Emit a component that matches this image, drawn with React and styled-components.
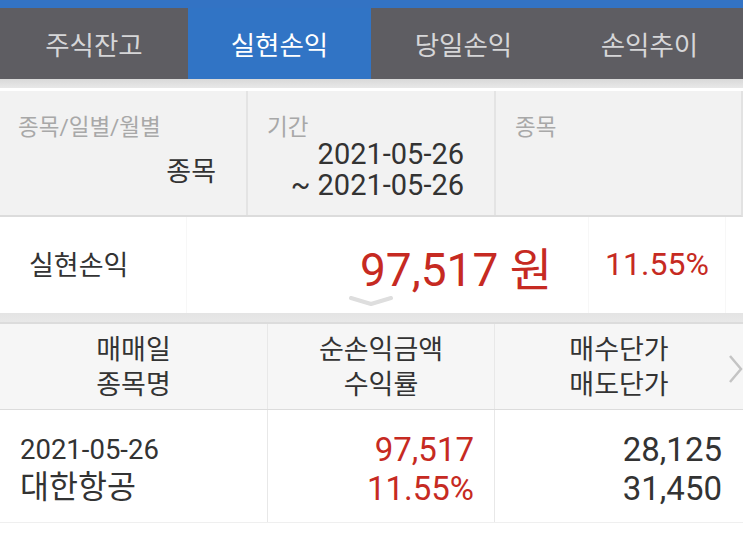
import React from "react";
import styled, { createGlobalStyle } from "styled-components";

const Global = createGlobalStyle`
    body {
        margin: 0;
        background: #fff;
        font-family: Roboto, "Noto Sans CJK KR", sans-serif;
        color: #333;
    }
`

const Page = styled.div`
    width: 743px;
    height: 545px;
    overflow: hidden;
    background: #fff;
`

const TopStrip = styled.div`
    height: 8px;
    background: #3373c4;
`

const TabBar = styled.div`
    display: grid;
    grid-template-columns: 188px 183px 185px 1fr;
    height: 71px;
    background: #5e5d62;
`

const Tab = styled.div`
    display: flex;
    align-items: center;
    justify-content: center;
    font-size: 26.5px;
    color: ${p => p.$active ? "#fff" : "#d6d6d8"};
    background: ${p => p.$active ? "#3174c5" : "transparent"};
`

const Gap = styled.div`
    height: ${p => p.$h}px;
    background: ${p => p.$bg};
`

const Filter = styled.div`
    display: grid;
    grid-template-columns: 246px 248px 1fr;
    height: 126px;
    background: #f2f2f2;
    border-bottom: 2px solid #dcdcdc;
    border-right: 2px solid #e2e2e2;
    box-sizing: border-box;
`

const FilterCell = styled.div`
    display: flex;
    flex-direction: column;
    padding: 23px 30px 0 ${p => p.$pl || 18}px;
    border-left: ${p => p.$first ? "none" : "2px solid #e4e4e4"};
`

const Label = styled.div`
    font-size: 22.5px;
    line-height: 26px;
    color: #a8a8a8;
`

const FilterValue = styled.div`
    text-align: right;
    font-size: ${p => p.$fs || 29}px;
    line-height: 31px;
    color: #333;
    margin-top: ${p => p.$mt || 0}px;
`

const Summary = styled.div`
    position: relative;
    display: grid;
    grid-template-columns: 186px 402px 137px 1fr;
    height: 96px;
    background: #fff;
`

const SumCell = styled.div`
    display: flex;
    align-items: center;
    justify-content: ${p => p.$align || "flex-start"};
    padding: 0 ${p => p.$pr || 0}px 0 ${p => p.$pl || 0}px;
    border-left: ${p => p.$line ? "1px solid #f7f7f7" : "none"};
`

const SumLabel = styled.div`
    font-size: 27px;
    color: #333;
    margin-top: -4px;
`

const Amount = styled.div`
    font-size: 46px;
    color: #c62a22;
    margin-top: 2px;
`

const Rate = styled.div`
    font-size: 32px;
    color: #c62a22;
    margin-top: -2px;
`

const DownArrow = styled.svg`
    position: absolute;
    left: 349px;
    top: 79px;
`

const TableRow = styled.div`
    position: relative;
    display: grid;
    grid-template-columns: 267px 227px 1fr;
    height: ${p => p.$h}px;
    background: ${p => p.$bg};
    border-bottom: 1px solid ${p => p.$border};
    box-sizing: border-box;
`

const Cell = styled.div`
    display: flex;
    flex-direction: column;
    justify-content: center;
    align-items: ${p => p.$align};
    padding: ${p => p.$pt || 0}px ${p => p.$pr || 0}px 0 ${p => p.$pl || 0}px;
    border-left: ${p => p.$line ? "1px solid #e8e8e8" : "none"};
    font-size: ${p => p.$fs}px;
    line-height: ${p => p.$lh}px;
    color: ${p => p.$red ? "#c62a22" : "#333"};
`

const Name = styled.div`
    font-size: 31.5px;
`

const RightArrow = styled.svg`
    position: absolute;
    right: 0;
    top: 30px;
`

export default function App() {
    return (
        <Page>
            <Global />
            <TopStrip />
            <TabBar>
                <Tab>주식잔고</Tab>
                <Tab $active>실현손익</Tab>
                <Tab>당일손익</Tab>
                <Tab>손익추이</Tab>
            </TabBar>
            <Gap $h={12} $bg="linear-gradient(#d9d9d9, #e8e8e8 75%, #fff 75%)" />

            <Filter>
                <FilterCell $first>
                    <Label>종목/일별/월별</Label>
                    <FilterValue $fs={27} $mt={17}>종목</FilterValue>
                </FilterCell>
                <FilterCell $pl={19}>
                    <Label>기간</Label>
                    <FilterValue $mt={-1}>2021-05-26</FilterValue>
                    <FilterValue>~ 2021-05-26</FilterValue>
                </FilterCell>
                <FilterCell $pl={19}>
                    <Label>종목</Label>
                </FilterCell>
            </Filter>

            <Summary>
                <SumCell $pl={29}><SumLabel>실현손익</SumLabel></SumCell>
                <SumCell $line $align="flex-end" $pr={36}><Amount>97,517 원</Amount></SumCell>
                <SumCell $line $align="center"><Rate>11.55%</Rate></SumCell>
                <SumCell $line />
                <DownArrow width="44" height="11" viewBox="0 0 44 11">
                    <path d="M2 2 L22 8 L42 2" fill="none" stroke="#dedede" strokeWidth="4" strokeLinecap="round" strokeLinejoin="round" />
                </DownArrow>
            </Summary>
            <Gap $h={11} $bg="linear-gradient(#e4e4e4, #e8e8e8 85%, #dcdcdc 85%)" />

            <TableRow $h={86} $bg="#f6f6f6" $border="#dcdcdc">
                <Cell $align="center" $pt={3} $fs={27} $lh={35}>
                    <div>매매일</div>
                    <div>종목명</div>
                </Cell>
                <Cell $line $align="center" $pt={3} $fs={27} $lh={35}>
                    <div>순손익금액</div>
                    <div>수익률</div>
                </Cell>
                <Cell $line $align="center" $pt={3} $fs={27} $lh={35}>
                    <div>매수단가</div>
                    <div>매도단가</div>
                </Cell>
                <RightArrow width="16" height="30" viewBox="0 0 16 30">
                    <path d="M3 2 L14 15 L3 28" fill="none" stroke="#c4c4c4" strokeWidth="2.5" />
                </RightArrow>
            </TableRow>

            <TableRow $h={113} $bg="#fff" $border="#efefef">
                <Cell $align="flex-start" $pl={20} $pt={6} $fs={27.5} $lh={38}>
                    <div>2021-05-26</div>
                    <Name>대한항공</Name>
                </Cell>
                <Cell $line $red $align="flex-end" $pr={20} $pt={6} $fs={33} $lh={39}>
                    <div>97,517</div>
                    <div>11.55%</div>
                </Cell>
                <Cell $line $align="flex-end" $pr={21} $pt={6} $fs={33} $lh={39}>
                    <div>28,125</div>
                    <div>31,450</div>
                </Cell>
            </TableRow>
        </Page>
    )
}
